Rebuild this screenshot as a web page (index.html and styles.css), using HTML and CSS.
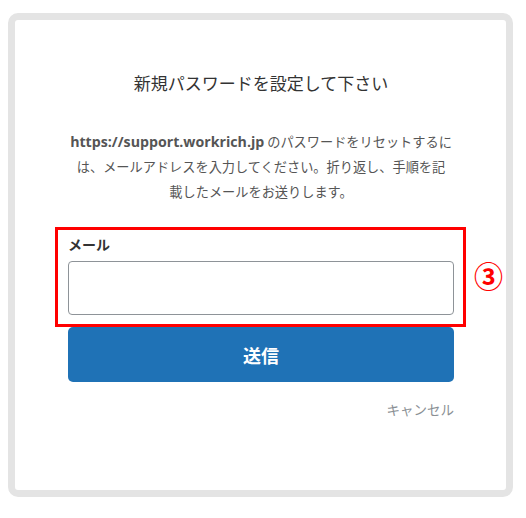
FILE: index.html
```html
<!DOCTYPE html>
<html lang="ja">
<head>
<meta charset="utf-8">
<title>新規パスワードを設定して下さい</title>
<link rel="stylesheet" href="styles.css">
</head>
<body>
<div class="card">
  <h1 class="title">新規パスワードを設定して下さい</h1>
  <p class="desc"><b class="site">https://support.workrich.jp</b> のパスワードをリセットするに<br>は、メールアドレスを入力してください。折り返し、手順を記<br>載したメールをお送りします。</p>
  <div class="highlight">
    <label class="label" for="mail">メール</label>
    <input class="input" id="mail" type="text">
    <span class="marker">③</span>
  </div>
  <button class="submit" type="button">送信</button>
  <div class="cancel-row"><a class="cancel">キャンセル</a></div>
</div>
</body>
</html>
```

FILE: styles.css
```css
html, body {
  margin: 0;
  padding: 0;
  background: #ffffff;
}
body {
  padding: 13px 0 0 8px;
  font-family: "Noto Sans CJK JP", "Noto Sans", sans-serif;
}
.card {
  box-sizing: border-box;
  width: 505px;
  height: 484px;
  border: 7px solid #e4e4e4;
  border-radius: 10px;
  padding: 51px 52px 0 53px;
  display: flex;
  flex-direction: column;
}
.title {
  margin: 0;
  font-size: 17px;
  line-height: 24px;
  font-weight: 400;
  color: #333333;
  text-align: center;
}
.desc {
  margin: 34px 0 0;
  font-size: 13.2px;
  line-height: 25px;
  color: #555555;
  text-align: center;
  white-space: nowrap;
}
.site {
  font-family: "Open Sans", "Noto Sans", sans-serif;
  font-size: 14.2px;
  font-weight: 700;
  color: #555555;
}
.highlight {
  position: relative;
  margin: 23px -12px 0 -13px;
  border: 3px solid #ff0000;
  padding: 3.5px 9px 9px 10px;
  display: flex;
  flex-direction: column;
}
.label {
  font-size: 14px;
  line-height: 20px;
  font-weight: 700;
  color: #333333;
}
.input {
  box-sizing: border-box;
  margin: 7.5px 0 0;
  height: 54px;
  width: 100%;
  border: 1px solid #8e9398;
  border-radius: 4px;
  background: #ffffff;
  padding: 0 10px;
  outline: none;
}
.marker {
  position: absolute;
  left: 416px;
  top: 28px;
  font-family: "Noto Sans CJK JP", sans-serif;
  font-size: 29px;
  line-height: 34px;
  font-weight: 700;
  color: #ff0000;
}
.submit {
  margin: 0;
  height: 55px;
  border: none;
  border-radius: 5px;
  background: #1f72b6;
  color: #ffffff;
  font-family: "Noto Sans CJK JP", sans-serif;
  font-size: 18px;
  font-weight: 700;
  cursor: pointer;
}
.cancel-row {
  margin-top: 17px;
  display: flex;
  justify-content: flex-end;
}
.cancel {
  font-size: 13.5px;
  line-height: 20px;
  color: #8a8f94;
  cursor: pointer;
}
```
